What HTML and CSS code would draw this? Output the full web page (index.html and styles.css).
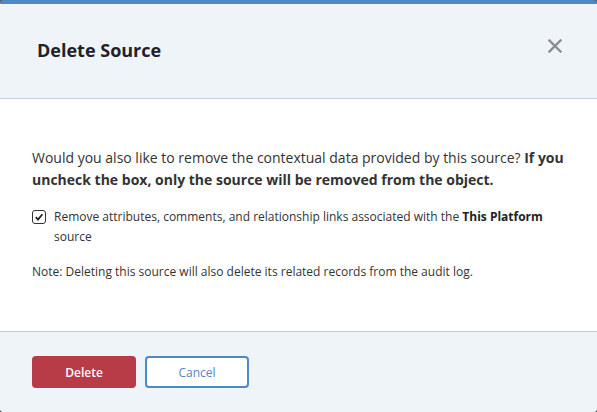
FILE: index.html
```html
<!DOCTYPE html>
<html>
<head>
<meta charset="utf-8">
<link rel="stylesheet" href="styles.css">
</head>
<body>
<div class="dialog">
  <div class="header">
    <h1 class="title">Delete Source</h1>
    <button class="close" aria-label="Close">
      <svg width="14" height="14" viewBox="0 0 14 14"><path d="M1.5 1.5 L12.5 12.5 M12.5 1.5 L1.5 12.5" stroke="#8a8d91" stroke-width="2.4" stroke-linecap="square"/></svg>
    </button>
  </div>
  <div class="body">
    <p class="lead">Would you also like to remove the contextual data provided by this source? <strong>If you uncheck the box, only the source will be removed from the object.</strong></p>
    <label class="check-row">
      <span class="box">
        <svg width="10" height="10" viewBox="0 0 10 10"><path d="M1.8 5.2 L4 7.6 L8.4 2.2" fill="none" stroke="#222" stroke-width="1.8"/></svg>
      </span>
      <span class="check-text">Remove attributes, comments, and relationship links associated with the <strong>This Platform</strong> source</span>
    </label>
    <p class="note">Note: Deleting this source will also delete its related records from the audit log.</p>
  </div>
  <div class="footer">
    <button class="btn btn-danger">Delete</button>
    <button class="btn btn-outline">Cancel</button>
  </div>
</div>
</body>
</html>
```
FILE: styles.css
```css
* { box-sizing: border-box; }
html, body { margin: 0; padding: 0; }
body {
  background: #5a5f66;
  font-family: "Open Sans", "Noto Sans", sans-serif;
  color: #333;
  width: 597px;
  height: 412px;
  overflow: hidden;
}
.dialog {
  width: 597px;
  height: 412px;
  background: #fff;
  border-radius: 4px;
  overflow: hidden;
  display: flex;
  flex-direction: column;
  border-top: 4px solid #4f88c6;
}
.header {
  height: 95px;
  background: #eff4f8;
  border-bottom: 1px solid #c5ccd6;
  display: flex;
  align-items: center;
  justify-content: space-between;
  padding: 0 35px 0 37px;
}
.title {
  margin: 0;
  font-size: 18px;
  font-weight: 700;
  color: #1f2229;
  position: relative;
  top: -1px;
}
.close {
  background: none;
  border: 0;
  padding: 0;
  width: 14px;
  height: 14px;
  display: flex;
  position: relative;
  top: -5px;
}
.body {
  flex: 1;
  padding: 48px 32px 0 32px;
  background: #fff;
}
.lead {
  margin: 0;
  font-size: 14px;
  line-height: 22px;
  color: #333;
}
.lead strong { font-weight: 700; }
.check-row {
  display: flex;
  align-items: flex-start;
  margin-top: 16px;
  font-size: 12px;
  line-height: 20px;
  color: #333;
}
.box {
  flex: none;
  width: 14px;
  height: 14px;
  border: 1.5px solid #333;
  border-radius: 3px;
  display: flex;
  align-items: center;
  justify-content: center;
  margin-top: 3px;
  margin-right: 8px;
}
.check-text strong { font-weight: 700; color: #222; }
.note {
  margin: 16px 0 0 0;
  font-size: 12px;
  line-height: 18px;
  color: #333;
}
.footer {
  height: 81px;
  background: #eff4f8;
  border-top: 1px solid #c5ccd6;
  padding: 24px 32px 0 32px;
  display: flex;
  align-items: flex-start;
  gap: 9px;
}
.btn {
  width: 104px;
  height: 32px;
  border-radius: 4px;
  font-family: "Open Sans", "Noto Sans", sans-serif;
  font-size: 12px;
  padding: 0;
}
.btn-danger {
  background: #b83c47;
  border: 0;
  color: #fff;
  font-weight: 600;
}
.btn-outline {
  background: #fff;
  border: 2px solid #4f88c6;
  color: #4f88c6;
}
```
